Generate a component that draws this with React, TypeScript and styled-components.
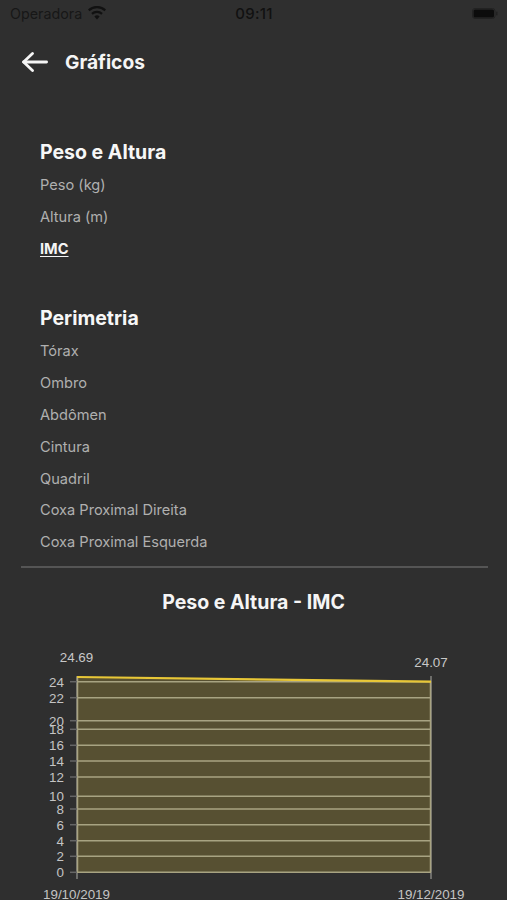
import React from "react";
import styled, { createGlobalStyle } from "styled-components";

const Global = createGlobalStyle`
  html, body { margin: 0; padding: 0; background: #2f2f2f; }
  body { font-family: Inter, "Liberation Sans", sans-serif; }
`;

const Page = styled.div`
  width: 507px;
  height: 900px;
  overflow: hidden;
  background: #2f2f2f;
  display: flex;
  flex-direction: column;
`;

const StatusBar = styled.div`
  height: 26px;
  padding: 0 9px 0 10px;
  display: grid;
  grid-template-columns: 1fr auto 1fr;
  align-items: center;
  color: #111;
  font-size: 14.3px;
`;

const Carrier = styled.div`
  display: flex;
  align-items: center;
  gap: 6px;
  color: #171717;
`;

const Clock = styled.div`
  font-weight: 500;
  font-size: 15px;
  letter-spacing: 0.3px;
  color: #111;
`;

const BatteryWrap = styled.div`
  justify-self: end;
  display: flex;
`;

const Header = styled.header`
  height: 72px;
  padding-left: 22px;
  display: flex;
  align-items: center;
  gap: 17px;
`;

const Title = styled.h1`
  margin: 0;
  font-size: 19.2px;
  font-weight: 700;
  color: #f5f5f5;
`;

const Menu = styled.nav`
  padding: 37px 40px 0;
  display: flex;
  flex-direction: column;
  gap: 36px;
`;

const Group = styled.section`
  display: flex;
  flex-direction: column;
`;

const GroupTitle = styled.h2`
  margin: 0;
  height: 35px;
  line-height: 35px;
  font-size: 19.5px;
  font-weight: 700;
  color: #f7f7f7;
`;

const Item = styled.div<{ $active?: boolean }>`
  height: 31.8px;
  line-height: 31.8px;
  font-size: 14.6px;
  color: ${(p) => (p.$active ? "#f5f5f5" : "#b0b0b0")};
  font-weight: ${(p) => (p.$active ? 700 : 400)};
  text-decoration: ${(p) => (p.$active ? "underline" : "none")};
  text-underline-offset: 2px;
`;

const Divider = styled.hr`
  margin: 7px 19px 0 21px;
  border: 0;
  height: 2px;
  background: #555;
`;

const ChartTitle = styled.h3`
  margin: 0;
  padding-top: 22px;
  height: 24px;
  line-height: 24px;
  text-align: center;
  font-size: 19.5px;
  font-weight: 700;
  color: #f5f5f5;
`;

const ChartSvg = styled.svg`
  display: block;
  margin-top: 26px;
  flex: none;
`;

const ticks: [number, number][] = [
  [24, 681.7], [22, 697.7], [20, 720.7], [18, 729.3], [16, 745.3], [14, 761],
  [12, 777], [10, 796.3], [8, 809], [6, 824.7], [4, 840.7], [2, 856.3], [0, 872.3],
];

const CHART_TOP = 640;
const LABEL_FONT = "'Liberation Sans', sans-serif";

const Chart = () => (
  <ChartSvg width={507} height={260} viewBox={`0 ${CHART_TOP} 507 260`}>
    <polygon points="77,677 431,681.5 431,872.5 77,872.5" fill="#575032" />
    <line x1={77} y1={676} x2={77} y2={879} stroke="#6d6d6a" strokeWidth={2} />
    <line x1={431} y1={676} x2={431} y2={879} stroke="#6d6d6a" strokeWidth={2} />
    <line x1={77.5} y1={677} x2={77.5} y2={872} stroke="#a8a382" strokeWidth={1.5} />
    <line x1={430.5} y1={681} x2={430.5} y2={872} stroke="#a8a382" strokeWidth={1.5} />
    {ticks.map(([v, y]) => (
      <g key={v}>
        <line x1={70} y1={y} x2={77} y2={y} stroke="#666" strokeWidth={1.5} />
        <line x1={77} y1={y} x2={431} y2={y} stroke="#a8a382" strokeWidth={1.5} />
        <text x={64} y={y + 5} textAnchor="end" fontFamily={LABEL_FONT} fontSize={13.4} fill="#c4c4c4">{v}</text>
      </g>
    ))}
    <line x1={77} y1={677} x2={431} y2={681.7} stroke="#e8c737" strokeWidth={2.2} />
    <text x={76.5} y={662} textAnchor="middle" fontFamily={LABEL_FONT} fontSize={13.4} fill="#c8c8c8">24.69</text>
    <text x={431} y={667} textAnchor="middle" fontFamily={LABEL_FONT} fontSize={13.4} fill="#c8c8c8">24.07</text>
    <text x={76.5} y={898.5} textAnchor="middle" fontFamily={LABEL_FONT} fontSize={13.4} fill="#c4c4c4">19/10/2019</text>
    <text x={431} y={898.5} textAnchor="middle" fontFamily={LABEL_FONT} fontSize={13.4} fill="#c4c4c4">19/12/2019</text>
  </ChartSvg>
);

const groups = [
  { title: "Peso e Altura", items: ["Peso (kg)", "Altura (m)", "IMC"] },
  {
    title: "Perimetria",
    items: ["Tórax", "Ombro", "Abdômen", "Cintura", "Quadril", "Coxa Proximal Direita", "Coxa Proximal Esquerda"],
  },
];

export default function App() {
  return (
    <Page>
      <Global />
      <StatusBar>
        <Carrier>
          Operadora
          <svg width="18" height="14" viewBox="0 0 18 14" fill="#111">
            <path d="M9 13.5 6.4 10.6a3.7 3.7 0 0 1 5.2 0L9 13.5Z" />
            <path d="M4.7 8.8 3.2 7.1a8.4 8.4 0 0 1 11.6 0l-1.5 1.7a6.2 6.2 0 0 0-8.6 0Z" />
            <path d="M1.5 5.3 0 3.6a13 13 0 0 1 18 0l-1.5 1.7a10.8 10.8 0 0 0-15 0Z" />
          </svg>
        </Carrier>
        <Clock>09:11</Clock>
        <BatteryWrap>
          <svg width="26" height="11" viewBox="0 0 26 11">
            <rect x="0.5" y="0.5" width="22.5" height="10" rx="2.5" fill="none" stroke="#222" />
            <rect x="1.5" y="1.5" width="20.5" height="8" rx="1.5" fill="#0c0c0c" />
            <rect x="24" y="3.5" width="1.5" height="4" rx="0.7" fill="#222" />
          </svg>
        </BatteryWrap>
      </StatusBar>
      <Header>
        <svg width="26" height="20" viewBox="0 0 26 20" fill="none" stroke="#f5f5f5" strokeWidth="2.8" strokeLinecap="round" strokeLinejoin="round">
          <path d="M24.6 10H1.6" />
          <path d="M10.5 1.5 1.6 10l8.9 8.5" />
        </svg>
        <Title>Gráficos</Title>
      </Header>
      <Menu>
        {groups.map((g) => (
          <Group key={g.title}>
            <GroupTitle>{g.title}</GroupTitle>
            {g.items.map((i) => (
              <Item key={i} $active={i === "IMC"}>{i}</Item>
            ))}
          </Group>
        ))}
      </Menu>
      <Divider />
      <ChartTitle>Peso e Altura - IMC</ChartTitle>
      <Chart />
    </Page>
  );
}
